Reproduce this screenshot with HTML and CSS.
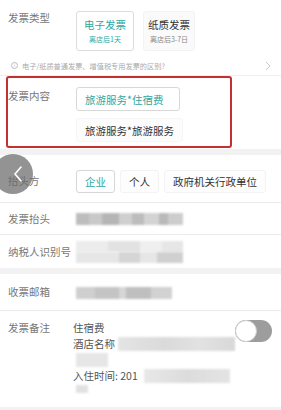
FILE: index.html
```html
<!DOCTYPE html>
<html lang="zh-CN">
<head>
<meta charset="utf-8">
<title>发票</title>
<link rel="stylesheet" href="styles.css">
</head>
<body>
<div class="page">
  <section class="card">
    <div class="row row-type">
      <div class="label">发票类型</div>
      <div class="opts">
        <div class="opt opt-on">
          <span class="opt-main">电子发票</span>
          <span class="opt-sub">离店后1天</span>
        </div>
        <div class="opt opt-off">
          <span class="opt-main">纸质发票</span>
          <span class="opt-sub">离店后3-7日</span>
        </div>
      </div>
    </div>
    <div class="hint">
      <span class="hint-icon">i</span>
      <span class="hint-text">电子/纸质普通发票、增值税专用发票的区别?</span>
      <svg class="hint-chev" width="6" height="10" viewBox="0 0 6 10"><polyline points="1,1 5,5 1,9" fill="none" stroke="#c8c8c8" stroke-width="1"/></svg>
    </div>
    <div class="row row-content">
      <div class="label">发票内容</div>
      <div class="stack">
        <div class="pill pill-on">旅游服务*住宿费</div>
        <div class="pill pill-off">旅游服务*旅游服务</div>
      </div>
      <div class="mark"></div>
    </div>
  </section>

  <section class="card">
    <div class="row row-party">
      <div class="label">抬头方</div>
      <div class="chips">
        <div class="chip chip-on">企业</div>
        <div class="chip">个人</div>
        <div class="chip">政府机关行政单位</div>
      </div>
    </div>
    <div class="row row-line row-title">
      <div class="label">发票抬头</div>
      <div class="blur blur-title"></div>
    </div>
    <div class="row row-line row-tax">
      <div class="label label-tax">纳税人识别号</div>
      <div class="blur-tax">
        <div class="blur blur-tax1"></div>
        <div class="blur blur-tax2"></div>
      </div>
    </div>
  </section>

  <section class="card">
    <div class="row row-line row-mail">
      <div class="label">收票邮箱</div>
      <div class="blur blur-mail"></div>
    </div>
    <div class="row row-remark">
      <div class="label">发票备注</div>
      <div class="remark">
        <div class="rline">住宿费</div>
        <div class="rline">酒店名称<span class="blur blur-r1"></span></div>
        <div class="rline"><span class="blur blur-r2"></span></div>
        <div class="rline">入住时间: 201<span class="blur blur-r3"></span></div>
        <div class="rline rshort"><span class="blur blur-r4"></span></div>
      </div>
      <div class="toggle"><span class="knob"></span></div>
    </div>
  </section>
</div>
<div class="back">
  <svg width="10" height="16" viewBox="0 0 10 16"><polyline points="8,1 2,8 8,15" fill="none" stroke="#ffffff" stroke-width="1.6" stroke-linejoin="round" stroke-linecap="round"/></svg>
</div>
</body>
</html>
```

FILE: styles.css
```css
* { box-sizing: border-box; }
html, body { margin: 0; padding: 0; }
body {
  background: #f2f2f2;
  font-family: "Noto Sans CJK SC", "Noto Sans", sans-serif;
  color: #333;
  width: 281px;
  height: 410px;
  overflow: hidden;
  position: relative;
}
.page { display: flex; flex-direction: column; gap: 6px; }
.card { background: #fff; display: flex; flex-direction: column; }

.row { display: flex; align-items: flex-start; padding-left: 8px; position: relative; }
.label {
  width: 65px;
  flex: none;
  font-size: 10.5px;
  line-height: 14px;
  color: #777;
  white-space: nowrap;
}

/* invoice type */
.row-type { height: 56px; padding-top: 11px; }
.opts { display: flex; gap: 9px; margin-left: 3px; }
.opt {
  height: 40px;
  display: flex;
  flex-direction: column;
  align-items: center;
  justify-content: center;
  gap: 4px;
  border-radius: 3px;
}
.opt-on { border: 1px solid #dcdcdc; padding: 0 7px; color: #2ea7a0; }
.opt-off { border: 1px solid #f3f3f3; background: #fafafa; padding: 0 4px; color: #333; }
.opt-main { font-size: 10.5px; line-height: 13px; }
.opt-sub { font-size: 7px; line-height: 9px; }
.opt-off .opt-sub { color: #888; }

/* hint */
.hint {
  height: 20px;
  display: flex;
  align-items: center;
  padding-left: 11px;
  padding-right: 10px;
  border-bottom: 1px solid #f0f0f0;
}
.hint-icon {
  width: 7px; height: 7px;
  border: 1px solid #bbb;
  border-radius: 50%;
  font-size: 5px;
  line-height: 5px;
  color: #bbb;
  text-align: center;
  font-family: "DejaVu Sans", sans-serif;
  margin-right: 4px;
}
.hint-text { font-size: 7.2px; color: #aaa; white-space: nowrap; }
.hint-chev { margin-left: auto; }

/* content */
.row-content { height: 73px; padding-top: 11px; }
.row-content .label { margin-top: 2px; }
.stack { display: flex; flex-direction: column; gap: 7px; margin-left: 3px; }
.pill {
  height: 24px;
  display: flex;
  align-items: center;
  font-size: 10.5px;
  border-radius: 3px;
  padding: 0 8px;
}
.pill-on { border: 1px solid #d8d8d8; color: #2ea7a0; width: 104px; }
.pill-off { border: 1px solid #f6f6f6; background: #fcfcfc; color: #333; }
.mark {
  position: absolute;
  left: 6px;
  top: 0;
  width: 226px;
  height: 72px;
  border: 2.5px solid #c4302b;
  border-radius: 3px;
}

/* party */
.row-party { height: 48px; padding-top: 15px; border-bottom: 1px solid #ececec; }
.row-party .label { margin-top: 4px; }
.chips { display: flex; gap: 5px; margin-left: 3px; }
.chip {
  height: 23px;
  display: flex;
  align-items: center;
  padding: 0 8px;
  font-size: 10.5px;
  color: #333;
  border: 1px solid #f3f3f3;
  background: #fdfdfd;
  border-radius: 3px;
}
.chip-on { border-color: #d6d6d6; color: #2ea7a0; background: #fff; }

.row-line { align-items: center; }
.row-title { height: 32px; border-bottom: 1px solid #ececec; }
.row-tax { height: 33px; }
.row-mail { height: 37px; border-bottom: 1px solid #ececec; }

.blur { display: block; filter: blur(1.2px); }
.blur-title {
  margin-left: 3px;
  width: 107px;
  height: 12px;
  background: linear-gradient(90deg, #bdbdbd 0 12%, #c9c9c9 12% 24%, #b5b5b5 24% 40%, #cfcfcf 40% 52%, #bdbdbd 52% 64%, #d3d3d3 64% 78%, #b9b9b9 78% 86%, #cdcdcd 86% 100%);
}
.blur-tax { margin-left: 3px; display: flex; flex-direction: column; }
.blur-tax1 { width: 107px; height: 11px; background: linear-gradient(90deg, #ececec 0 30%, #e2e2e2 30% 60%, #efefef 60% 80%, #e6e6e6 80% 100%); }
.blur-tax2 { width: 107px; height: 11px; background: linear-gradient(90deg, #e6e6e6 0 40%, #d5d5d5 40% 60%, #e6e6e6 60% 76%, #d0d0d0 76% 100%); }
.blur-mail {
  margin-left: 3px;
  margin-top: 2px;
  width: 96px;
  height: 12px;
  background: linear-gradient(90deg, #cfcfcf 0 20%, #c4c4c4 20% 45%, #d6d6d6 45% 52%, #bfbfbf 52% 78%, #d2d2d2 78% 100%);
}

/* remark */
.row-remark { height: 96px; padding-top: 9px; }
.row-remark .label { margin-top: 1px; }
.remark { display: flex; flex-direction: column; font-size: 10.5px; color: #555; }
.rline { height: 16px; line-height: 16px; display: flex; align-items: center; white-space: nowrap; }
.rshort { height: 10px; }
.blur-r1 { width: 117px; height: 14px; margin-left: 3px; background: linear-gradient(90deg, #e4e4e4, #dadada 40%, #e2e2e2 70%, #d8d8d8); }
.blur-r2 { width: 32px; height: 14px; margin-left: 3px; background: #e6e6e6; }
.blur-r3 { width: 86px; height: 14px; margin-left: 6px; background: linear-gradient(90deg, #e8e8e8, #dcdcdc 50%, #e4e4e4); }
.blur-r4 { width: 12px; height: 8px; margin-left: 3px; background: #e2e2e2; }
.toggle {
  margin-left: auto;
  margin-right: 9px;
  width: 37px;
  height: 22px;
  border-radius: 11px;
  background: #9d9d9d;
  position: relative;
}
.knob {
  position: absolute;
  left: 0;
  top: 0;
  width: 22px;
  height: 22px;
  border-radius: 50%;
  background: #fff;
  border: 1px solid #cfcfcf;
}

/* floating back button */
.back {
  position: absolute;
  left: -7px;
  top: 154px;
  width: 40px;
  height: 40px;
  border-radius: 50%;
  background: rgba(105, 105, 105, 0.72);
  display: flex;
  align-items: center;
  justify-content: center;
  padding-left: 10px;
}
```
